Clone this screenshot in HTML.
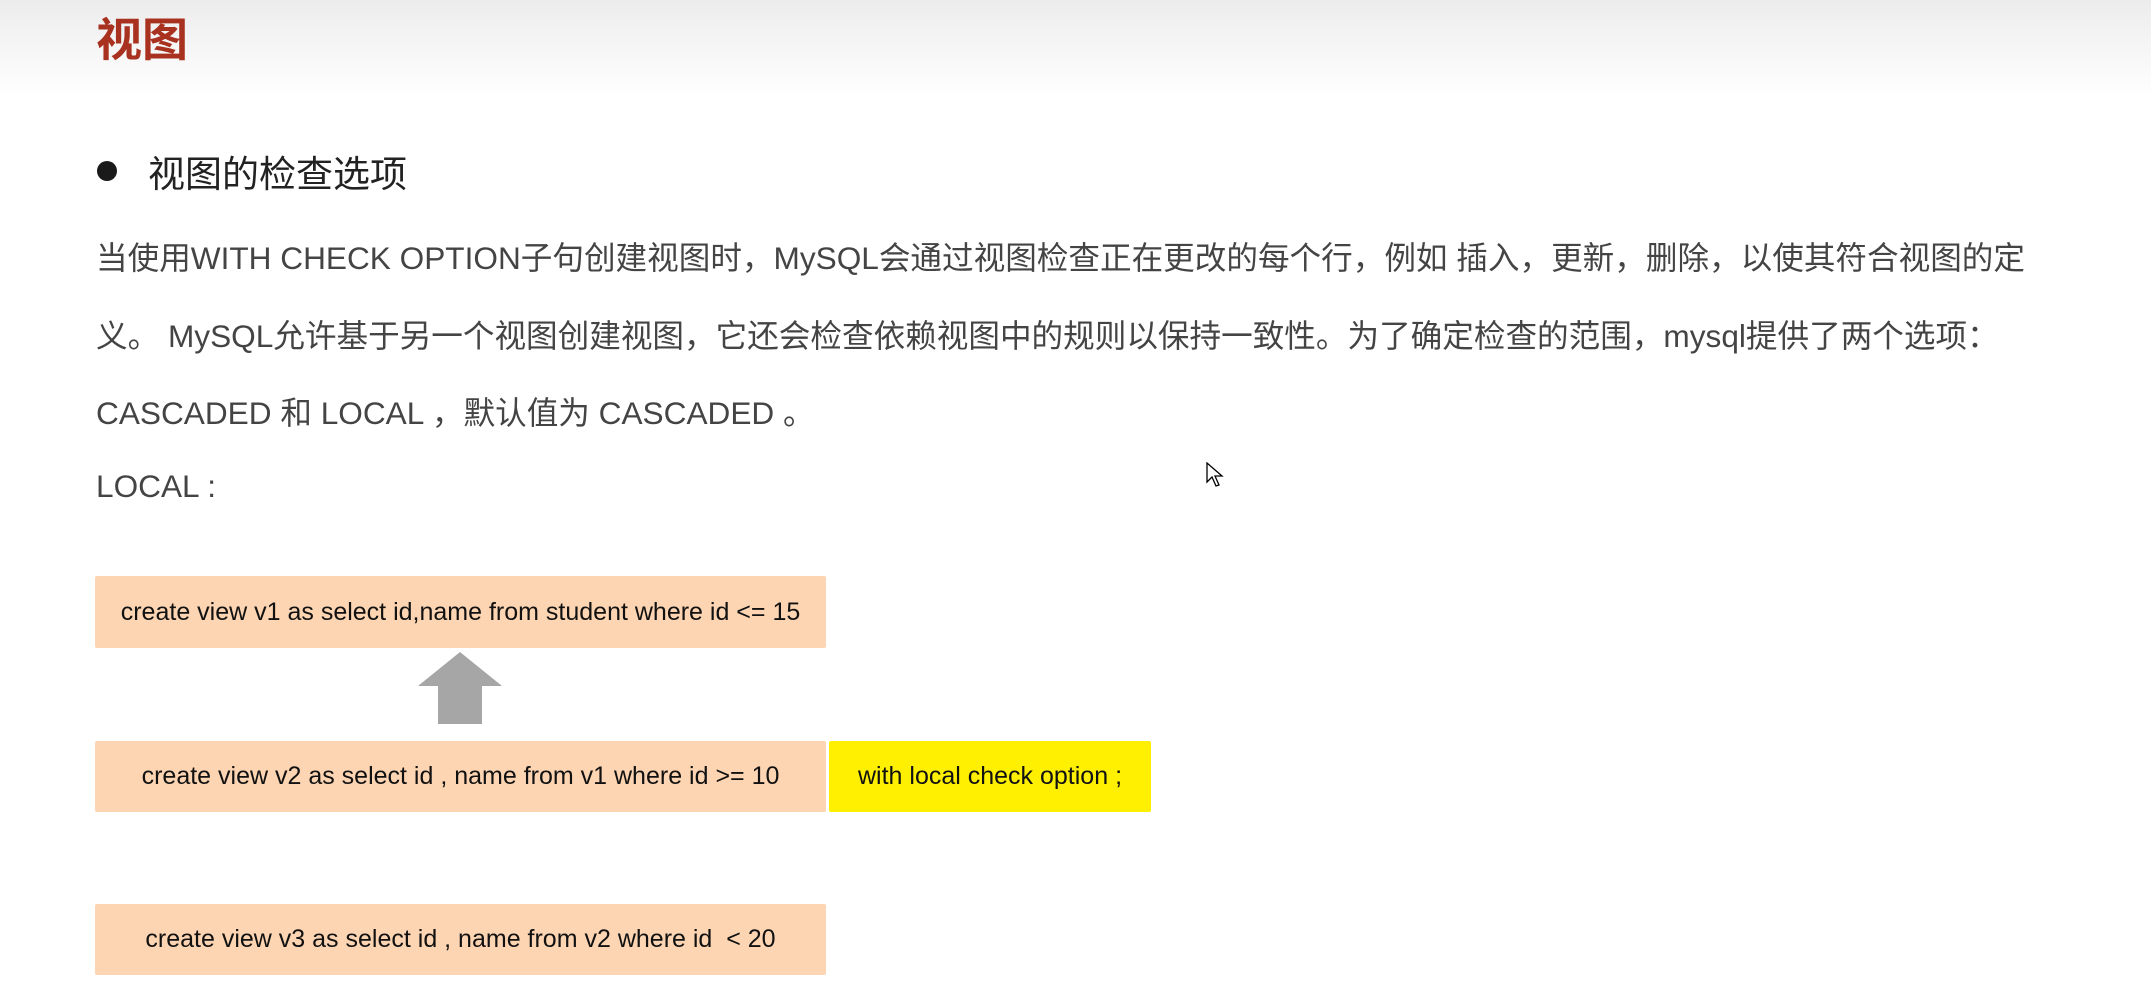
<!DOCTYPE html>
<html><head><meta charset="utf-8"><style>
html,body{margin:0;padding:0;width:2151px;height:992px;overflow:hidden;background:#fff;font-family:"Liberation Sans","Noto Sans CJK SC",sans-serif;}
.hdr{position:absolute;left:0;top:0;width:2151px;height:100px;background:linear-gradient(#ececec,#fafafa 70%,#fff);}
.title{position:absolute;left:96px;top:4px;font-size:46px;font-weight:bold;color:#a8321f;}
.bullet{position:absolute;left:97px;top:161px;width:20px;height:20px;border-radius:50%;background:#1a1a1a;}
.sub{position:absolute;left:148px;top:144px;font-size:37px;color:#222;}
.p{position:absolute;left:96px;font-size:31.6px;color:#444;white-space:nowrap;}
.box{position:absolute;background:#fdd5b2;font-family:"Liberation Sans Narrow","Liberation Sans",sans-serif;font-size:25px;color:#111;display:flex;align-items:center;justify-content:center;border-radius:2px;}
</style></head><body>
<div class="hdr"></div>
<div class="title">视图</div>
<div class="bullet"></div>
<div class="sub">视图的检查选项</div>
<div class="p" style="top:233px">当使用WITH CHECK OPTION子句创建视图时，MySQL会通过视图检查正在更改的每个行，例如 插入，更新，删除，以使其符合视图的定</div>
<div class="p" style="top:311px">义。 MySQL允许基于另一个视图创建视图，它还会检查依赖视图中的规则以保持一致性。为了确定检查的范围，mysql提供了两个选项：</div>
<div class="p" style="top:388px">CASCADED 和 LOCAL ，默认值为 CASCADED 。</div>
<div class="p" style="top:468px">LOCAL :</div>
<div class="box" style="left:95px;top:576px;width:731px;height:72px">create view v1 as select id,name from student where id &lt;= 15</div>
<svg style="position:absolute;left:418px;top:652px" width="84" height="72"><polygon points="42,0 84,34 64,34 64,72 20,72 20,34 0,34" fill="#a6a6a6"/></svg>
<div class="box" style="left:95px;top:741px;width:731px;height:71px">create view v2 as select id , name from v1 where id &gt;= 10</div>
<div class="box" style="left:829px;top:741px;width:322px;height:71px;background:#fef000">with local check option ;</div>
<div class="box" style="left:95px;top:904px;width:731px;height:71px">create view v3 as select id , name from v2 where id &nbsp;&lt; 20</div>
<svg style="position:absolute;left:1206px;top:462px" width="18" height="26"><path d="M1,1 L1,20 L6,15 L10,24 L13,23 L9,14 L16,14 Z" fill="#fff" stroke="#000" stroke-width="1.3"/></svg>
</body></html>
